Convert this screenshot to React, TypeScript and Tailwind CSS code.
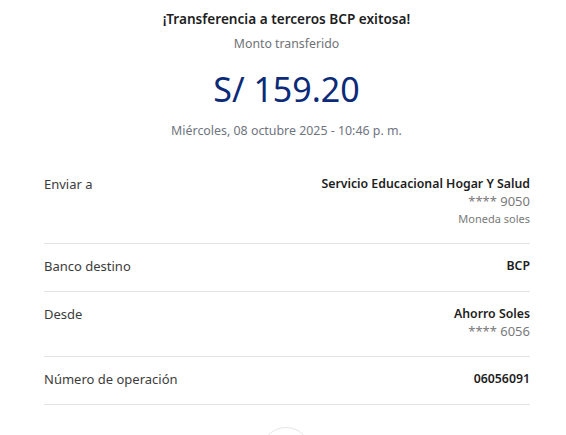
const rows = [
  { label: "Enviar a", main: "Servicio Educacional Hogar Y Salud", sub: ["**** 9050", "Moneda soles"] },
  { label: "Banco destino", main: "BCP", sub: [] },
  { label: "Desde", main: "Ahorro Soles", sub: ["**** 6056"] },
  { label: "Número de operación", main: "06056091", sub: [] },
];

export default function App() {
  return (
    <div className="h-[435px] w-[566px] overflow-hidden bg-white" style={{ fontFamily: '"Noto Sans", sans-serif' }}>
      <div className="flex flex-col items-center pl-[7px] pt-[9px]">
        <h1 className="text-[13.6px] font-semibold leading-[20px] text-[#1e1e1e]">¡Transferencia a terceros BCP exitosa!</h1>
        <p className="mt-[6px] text-[12.3px] leading-[18px] text-[#6f7276]">Monto transferido</p>
        <p className="mt-[12px] text-[34px] leading-[48px] text-[#0b2a78]">S/ 159.20</p>
        <p className="mt-[10px] text-[12.4px] leading-[16px] text-[#6f7480]">Miércoles, 08 octubre 2025 - 10:46 p. m.</p>
      </div>
      <div className="mx-[44px] mt-[23px] w-[486px]">
        {rows.map((row) => (
          <div key={row.label} className="flex justify-between border-b border-[#e3e3e3] pb-[16px] pt-[13px]">
            <span className="text-[13px] leading-[18px] text-[#3c3c3c]">{row.label}</span>
            <div className="flex flex-col items-end">
              <span className="text-[12.3px] font-semibold leading-[18px] text-[#1e1e1e]">{row.main}</span>
              {row.sub.map((s, i) => (
                <span key={s} className={i === 0 ? "text-[13px] leading-[17px] text-[#7a7a7a]" : "text-[11px] leading-[17px] text-[#7a7a7a]"}>
                  {s}
                </span>
              ))}
            </div>
          </div>
        ))}
      </div>
      <div className="mt-[22px] flex justify-center">
        <div className="ml-[6px] h-[50px] w-[50px] rounded-full border border-[#e6e6e6] bg-white" />
      </div>
    </div>
  );
}
